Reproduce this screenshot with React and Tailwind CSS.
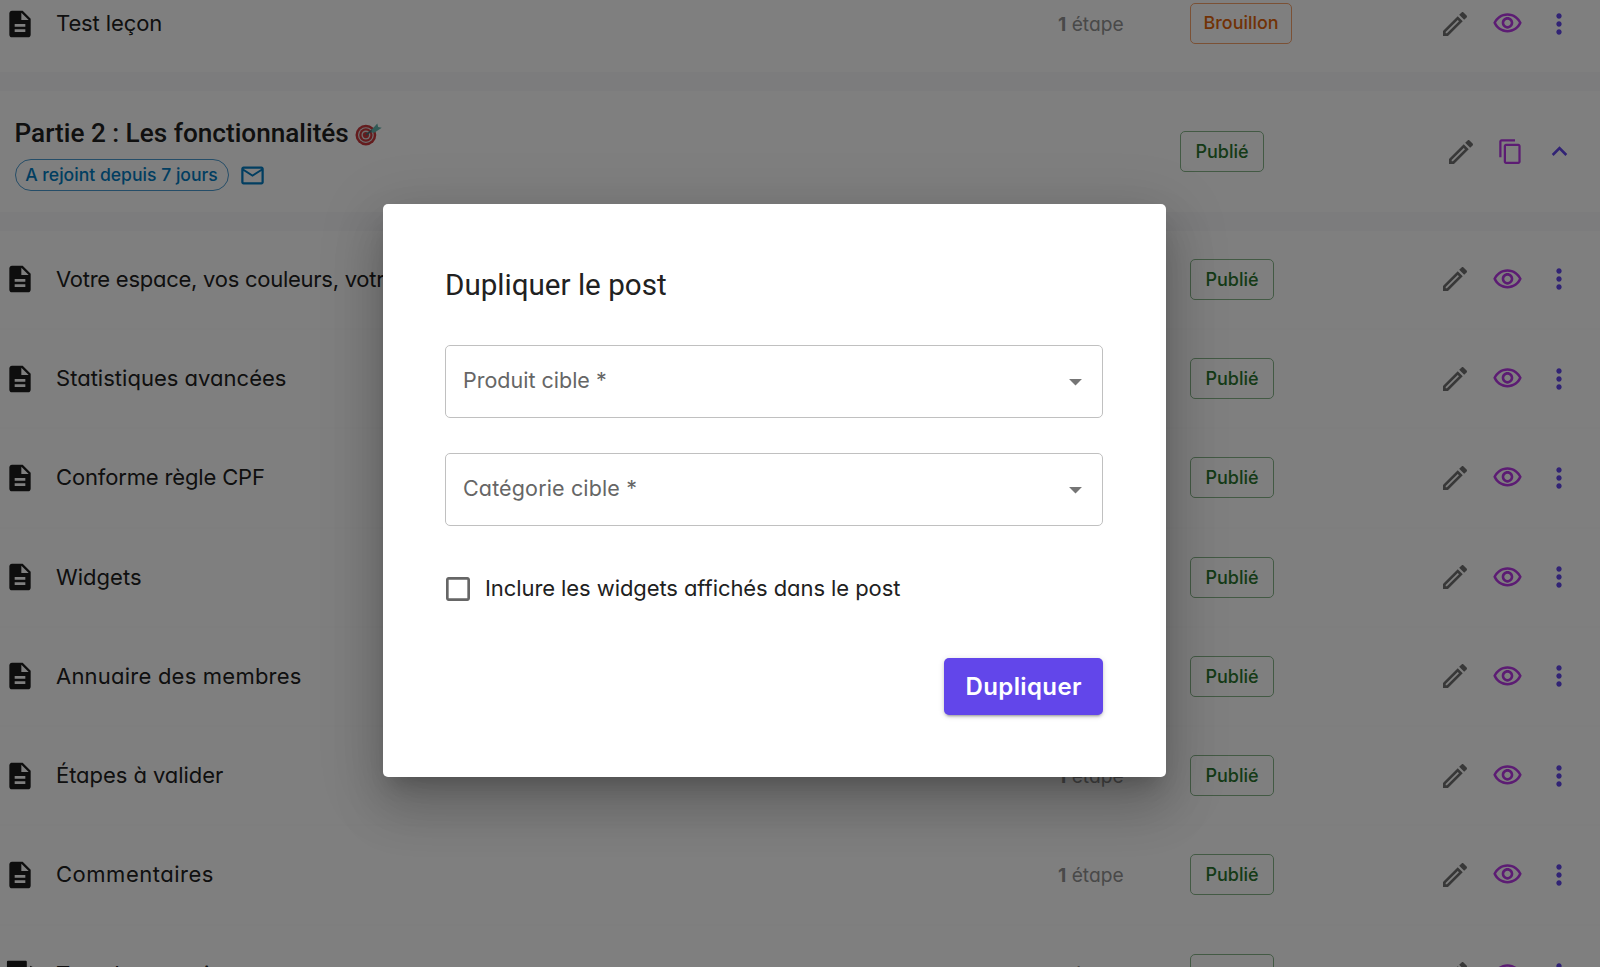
const INTER = "font-['Inter',sans-serif] [font-feature-settings:'cv11']";

function Icon({ size, className, children }) {
  return (
    <svg viewBox="0 0 24 24" width={size} height={size} fill="currentColor" className={`shrink-0 ${className || ""}`}>
      {children}
    </svg>
  );
}
const Doc = () => (
  <Icon size={32} className="text-[#1c1c1c]">
    <path d="M14 2H6c-1.100 0-1.990.900-1.990 2L4 20c0 1.100.890 2 1.990 2H18c1.100 0 2-.900 2-2V8l-6-6zm2 16H8v-2h8v2zm0-4H8v-2h8v2zm-3-5V3.500L18.500 9H13z" />
  </Icon>
);
const Screen = () => (
  <Icon size={32} className="text-[#1c1c1c]">
    <path d="M3 2h13.300a.8.8 0 0 1 .8.8V9H2.200V2.800A.8.8 0 0 1 3 2zM19.600 5.800 22 7v4h-2.400z" />
  </Icon>
);
const Pencil = () => (
  <Icon size={32} className="text-[#707070]">
    <path d="m14.060 9.020.920.920L5.920 19H5v-.920l9.060-9.060M17.660 3c-.250 0-.510.100-.700.290l-1.830 1.830 3.750 3.750 1.830-1.830c.390-.390.390-1.020 0-1.410l-2.340-2.340c-.200-.200-.450-.290-.710-.290zm-3.600 3.190L3 17.250V21h3.750L17.810 9.940l-3.750-3.750z" />
  </Icon>
);
const Eye = () => (
  <Icon size={31} className="text-[#b838e6]">
    <path d="M12 6c3.790 0 7.170 2.130 8.820 5.500C19.170 14.870 15.790 17 12 17s-7.170-2.130-8.820-5.500C4.830 8.130 8.210 6 12 6m0-2C7 4 2.730 7.110 1 11.500 2.730 15.890 7 19 12 19s9.270-3.110 11-7.500C21.270 7.110 17 4 12 4zm0 5c1.380 0 2.500 1.120 2.500 2.500S13.380 14 12 14s-2.500-1.120-2.500-2.500S10.620 9 12 9m0-2c-2.480 0-4.500 2.020-4.500 4.500S9.520 16 12 16s4.500-2.020 4.500-4.500S14.480 7 12 7z" />
  </Icon>
);
const Dots = () => (
  <Icon size={32} className="text-[#6246ea]">
    <path d="M12 8c1.100 0 2-.900 2-2s-.900-2-2-2-2 .900-2 2 .900 2 2 2zm0 2c-1.100 0-2 .900-2 2s.900 2 2 2 2-.900 2-2-.900-2-2-2zm0 6c-1.100 0-2 .900-2 2s.900 2 2 2 2-.900 2-2-.900-2-2-2z" />
  </Icon>
);
const Copy = () => (
  <Icon size={27} className="text-[#b838e6]">
    <path d="M16 1H4c-1.100 0-2 .900-2 2v14h2V3h12V1zm3 4H8c-1.100 0-2 .900-2 2v14c0 1.100.900 2 2 2h11c1.100 0 2-.900 2-2V7c0-1.100-.900-2-2-2zm0 16H8V7h11v14z" />
  </Icon>
);
const Up = () => (
  <Icon size={31} className="text-[#6246ea]">
    <path d="M7.410 15.410 12 10.830l4.590 4.580L18 14l-6-6-6 6z" />
  </Icon>
);
const Mail = () => (
  <Icon size={27} className="text-[#027cc2]">
    <path d="M20 4H4c-1.100 0-1.990.900-1.990 2L2 18c0 1.100.900 2 2 2h16c1.100 0 2-.900 2-2V6c0-1.100-.900-2-2-2zm0 14H4V8l8 5 8-5v10zm-8-7L4 6h16l-8 5z" />
  </Icon>
);

function Target() {
  return (
    <svg viewBox="0 0 26 22" width="27" height="23" className="ml-[6.500px] mt-[2px] shrink-0">
      <circle cx="10.500" cy="11.500" r="10" fill="#c8383c" />
      <circle cx="10.500" cy="11.500" r="7.600" fill="#ddd" />
      <circle cx="10.500" cy="11.500" r="6.400" fill="#c8383c" />
      <circle cx="10.500" cy="11.500" r="4.300" fill="#ddd" />
      <circle cx="10.500" cy="11.500" r="3" fill="#c8383c" />
      <path d="M10.500 11.500 19 5" stroke="#4a6a70" strokeWidth="1.600" />
      <path d="m16 6.500 5.500-6 .8 3.200 3.500.8-6.800 4.500-3 .3z" fill="#63b5ac" />
    </svg>
  );
}

function Badge({ draft }) {
  return draft ? (
    <span className="flex h-[41px] w-[102px] items-center justify-center rounded-[5px] border border-[#f6a26b] text-[17.900px] font-medium text-[#e2640a]">
      Brouillon
    </span>
  ) : (
    <span className="flex h-[41px] w-[84px] items-center justify-center rounded-[5px] border border-[#86b489] text-[18px] font-medium text-[#2a752e]">
      Publié
    </span>
  );
}

function Row({ title, spacing, draft, icon }) {
  return (
    <div className="flex h-[99.250px] shrink-0 items-center border-b-[2px] border-[#fcfcfd] pl-[3.500px]">
      {icon || <Doc />}
      <span className={`ml-[20.500px] w-[1002px] whitespace-nowrap text-[22px] [font-weight:370] text-[#212121] ${spacing}`}>{title}</span>
      <span className="w-[132px] pt-px text-[19.200px] text-[#929292]">
        <b className="font-bold">1</b> étape
      </span>
      <div className="w-[249px]"><Badge draft={draft} /></div>
      <Pencil />
      <div className="ml-[21px]"><Eye /></div>
      <div className="ml-[20px]"><Dots /></div>
    </div>
  );
}

function Field({ label, spacing }) {
  return (
    <div className="flex h-[73px] w-[658px] items-center justify-between rounded-[5px] border border-[#c0c0c0] pl-[17px] pr-[11px] text-[#666]">
      <span className={`pb-[2px] text-[21.500px] [font-weight:370] ${spacing}`}>{label}</span>
      <Icon size={31} className="text-[#757575]">
        <path d="m7 10 5 5 5-5z" />
      </Icon>
    </div>
  );
}

export default function App() {
  return (
    <div className={`relative h-[967px] w-[1600px] overflow-hidden bg-white ${INTER}`}>
      <div className="-mt-[25px] flex flex-col">
        <Row title="Test leçon" draft spacing="tracking-[-0.1px]" />
        <div className="-mt-[2px] h-[19px] bg-[#f9f9fa]" />
        <div className="flex h-[120.500px] shrink-0 items-center pl-[14.500px]">
          <div className="w-[1165.500px] pt-[2px]">
            <div className="flex h-[38px] items-center">
              <span className="whitespace-nowrap pt-px font-['Roboto',sans-serif] text-[26.150px] font-medium text-[#212121]">Partie 2 : Les fonctionnalités</span>
              <Target />
            </div>
            <div className="mt-[7px] flex items-center">
              <span className="flex h-[32px] w-[214px] items-center justify-center whitespace-nowrap rounded-full border border-[#4b9bd0] text-[17.600px] font-medium text-[#027cc2]">
                A rejoint depuis 7 jours
              </span>
              <div className="ml-[10px]"><Mail /></div>
            </div>
          </div>
          <div className="w-[265px]"><Badge /></div>
          <Pencil />
          <div className="ml-[20px]"><Copy /></div>
          <div className="ml-[20px]"><Up /></div>
        </div>
        <div className="h-[19px] bg-[#f9f9fa]" />
        <Row title="Votre espace, vos couleurs, votre logo" spacing="tracking-[-0.26px]" />
        <Row title="Statistiques avancées" spacing="tracking-[0.02px]" />
        <Row title="Conforme règle CPF" spacing="tracking-[-0.15px]" />
        <Row title="Widgets" spacing="tracking-[0.02px]" />
        <Row title="Annuaire des membres" spacing="tracking-[0.22px]" />
        <Row title="Étapes à valider" spacing="tracking-[-0.05px]" />
        <Row title="Commentaires" spacing="tracking-[0.52px]" />
        <Row title="Test de connaissances" spacing="" icon={<Screen />} />
      </div>

      <div className="absolute inset-0 bg-black/50 pl-[382.600px] pt-[204px]">
        <div className="flex h-[573px] w-[783px] flex-col rounded-[5px] bg-white px-[62.400px] shadow-[0_14px_20px_-9px_rgba(0,0,0,0.2),0_31px_50px_4px_rgba(0,0,0,0.14),0_12px_60px_10px_rgba(0,0,0,0.12)]">
          <h2 className="mt-[61px] h-[40px] font-['Roboto',sans-serif] text-[29.600px] leading-[40px] text-[#212121]">Dupliquer le post</h2>
          <div className="mt-[40px]"><Field label="Produit cible *" spacing="" /></div>
          <div className="mt-[35px]"><Field label="Catégorie cible *" spacing="tracking-[0.14px]" /></div>
          <div className="mt-[47px] flex h-[32px] items-center">
            <Icon size={32} className="-ml-[3px] text-[#666]">
              <path d="M19 5v14H5V5h14m0-2H5c-1.100 0-2 .900-2 2v14c0 1.100.900 2 2 2h14c1.100 0 2-.900 2-2V5c0-1.100-.900-2-2-2z" />
            </Icon>
            <span className="ml-[11px] whitespace-nowrap pb-px text-[22px] tracking-[-0.08px] [font-weight:370] text-[#212121]">Inclure les widgets affichés dans le post</span>
          </div>
          <div className="mt-[53px] flex justify-end">
            <button className="h-[57px] w-[159px] rounded-[5px] bg-[#6246ea] text-[24px] font-semibold tracking-[0.4px] text-white shadow-[0_4px_2px_-3px_rgba(0,0,0,0.2),0_2px_3px_rgba(0,0,0,0.14),0_1px_6px_rgba(0,0,0,0.12)]">
              Dupliquer
            </button>
          </div>
        </div>
      </div>
    </div>
  );
}
